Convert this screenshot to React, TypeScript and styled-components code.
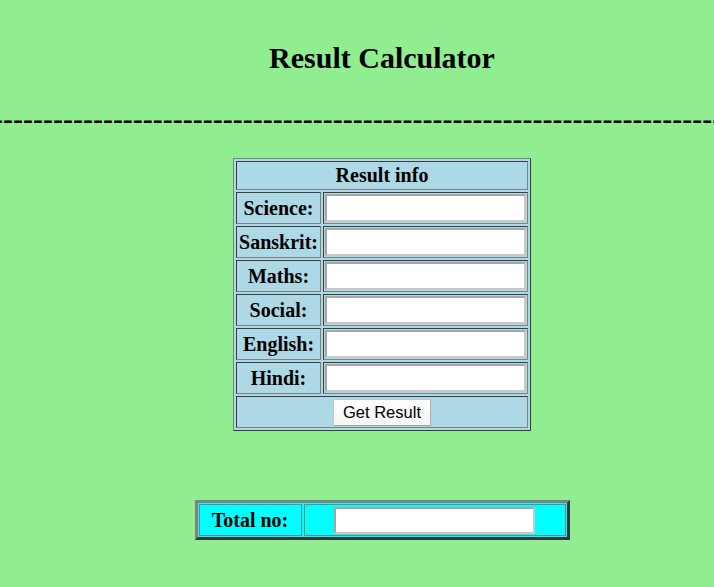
import React from "react";
import styled, { createGlobalStyle } from "styled-components";

const GlobalStyle = createGlobalStyle`
  html, body {
    margin: 0;
    padding: 0;
    background: #90ee90;
    overflow: hidden;
  }
  body {
    font-family: "Liberation Serif", "Times New Roman", serif;
    color: #000;
  }
`;

const Page = styled.div`
  padding-top: 41px;
  display: flex;
  flex-direction: column;
`;

const Column = styled.div`
  padding-left: 50px;
  display: flex;
  flex-direction: column;
  align-items: center;
`;

const Title = styled.h1`
  margin: 0;
  font-size: 30px;
  line-height: 34px;
  font-weight: bold;
  text-align: center;
`;

const DashLine = styled.div`
  margin-top: 27px;
  font-size: 30px;
  line-height: 34px;
  font-weight: bold;
  white-space: nowrap;
  overflow: hidden;
  text-indent: -7px;
`;

const ResultGrid = styled.div`
  margin-top: 22px;
  display: grid;
  grid-template-columns: 85px 205px;
  grid-auto-rows: 32px;
  grid-template-rows: 29px;
  gap: 2px;
  padding: 2px;
  background: #add8e6;
  border: 1px solid;
  border-color: #808080 #3c3c3c #3c3c3c #808080;
`;

const Cell = styled.div<{ $span?: boolean }>`
  grid-column: ${(p) => (p.$span ? "1 / span 2" : "auto")};
  display: flex;
  align-items: center;
  justify-content: center;
  padding: 1px;
  border: 1px solid;
  border-color: #3c3c3c #808080 #808080 #3c3c3c;
  font-size: 20px;
  font-weight: bold;
  min-width: 0;
`;

const TextInput = styled.input<{ $w?: number; $h?: number }>`
  box-sizing: border-box;
  width: ${(p) => (p.$w ? `${p.$w}px` : "100%")};
  height: ${(p) => p.$h ?? 28}px;
  margin: 0;
  padding: 1px 2px;
  background: #fff;
  border: 2px solid;
  border-color: #a6a6a6 #c8c8c8 #c8c8c8 #a6a6a6;
  outline: none;
  font-family: "Liberation Sans", Arial, sans-serif;
  font-size: 16px;
`;

const Button = styled.button`
  box-sizing: border-box;
  width: 98px;
  height: 27px;
  margin: 0;
  padding: 0 9px;
  background: linear-gradient(#ffffff, #f4f4f4);
  border: 1px solid;
  border-color: #c6c6c6 #adadad #a0a0a0 #c6c6c6;
  font-family: "Liberation Sans", Arial, sans-serif;
  font-size: 16.5px;
  color: #000;
`;

const TotalGrid = styled.div`
  margin-top: 69px;
  display: grid;
  grid-template-columns: 103px 262px;
  grid-template-rows: 32px;
  gap: 2px;
  padding: 1px;
  background: #00ffff;
  border: 3px solid;
  border-color: #808080 #353535 #353535 #808080;
`;

const TotalCell = styled.div`
  display: flex;
  align-items: center;
  justify-content: center;
  border: 1px solid #808080;
  font-size: 20px;
  font-weight: bold;
`;

const subjects = ["Science:", "Sanskrit:", "Maths:", "Social:", "English:", "Hindi:"];

export default function App() {
  return (
    <>
      <GlobalStyle />
      <Page>
        <Column>
          <Title>Result Calculator</Title>
        </Column>
        <DashLine>{"-".repeat(90)}</DashLine>
        <Column>
          <ResultGrid>
            <Cell $span>Result info</Cell>
            {subjects.map((s) => (
              <React.Fragment key={s}>
                <Cell>{s}</Cell>
                <Cell>
                  <TextInput type="text" />
                </Cell>
              </React.Fragment>
            ))}
            <Cell $span>
              <Button type="button">Get Result</Button>
            </Cell>
          </ResultGrid>
          <TotalGrid>
            <TotalCell>Total no:</TotalCell>
            <TotalCell>
              <TextInput type="text" $w={201} $h={27} />
            </TotalCell>
          </TotalGrid>
        </Column>
      </Page>
    </>
  );
}
